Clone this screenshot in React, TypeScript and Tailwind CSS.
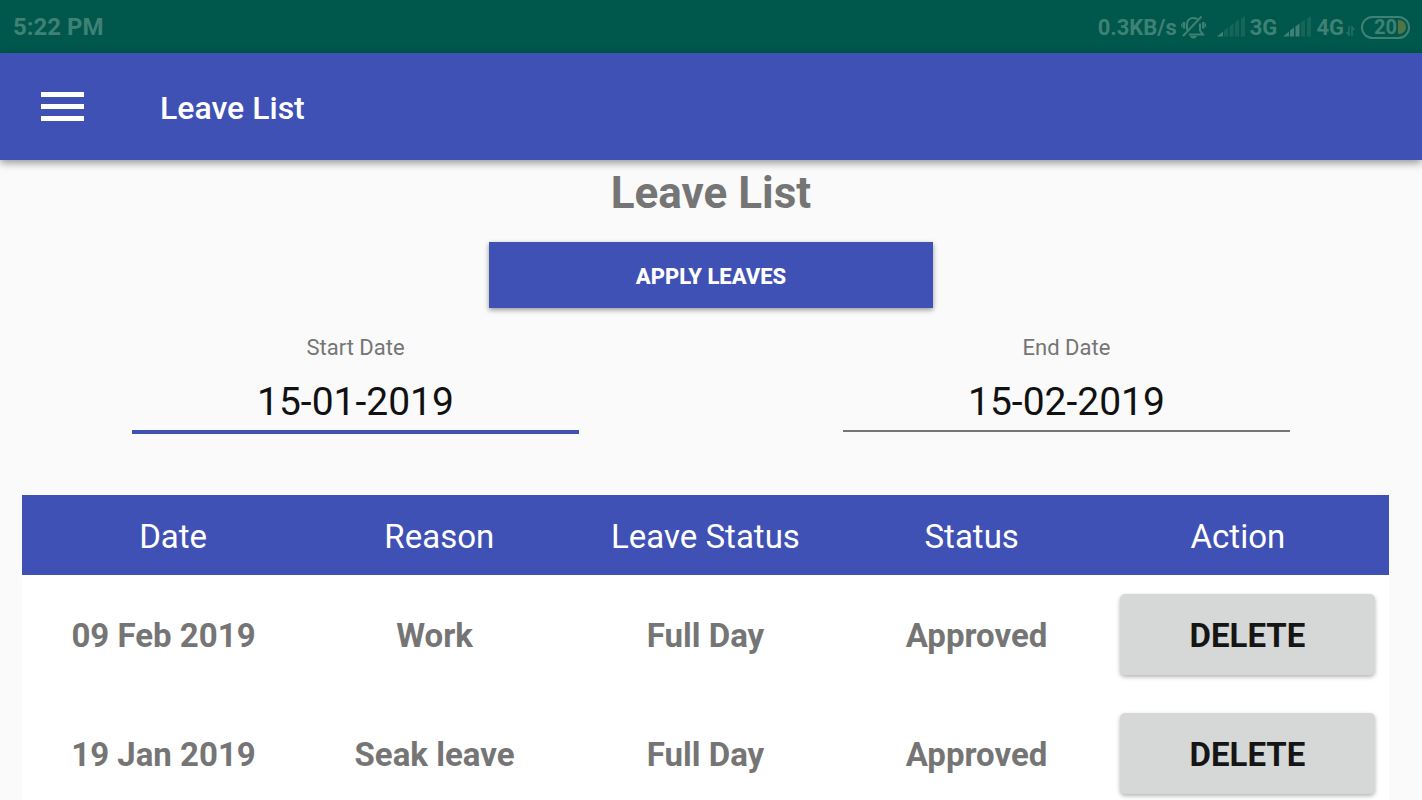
import React, { useState } from 'react';

interface Leave {
  id: number;
  date: string;
  reason: string;
  leaveStatus: string;
  status: string;
}

const initialLeaves: Leave[] = [
  { id: 1, date: '09 Feb 2019', reason: 'Work', leaveStatus: 'Full Day', status: 'Approved' },
  { id: 2, date: '19 Jan 2019', reason: 'Seak leave', leaveStatus: 'Full Day', status: 'Approved' },
];

const columns = ['Date', 'Reason', 'Leave Status', 'Status', 'Action'];

const MutedBellIcon: React.FC = () => (
  <svg width="26" height="26" viewBox="0 0 26 26" fill="none" stroke="currentColor" strokeWidth="2" className="ml-1" aria-hidden="true">
    <path d="M6 16V10.500C6 6.500 8.500 4 12.500 4C14 4 15.500 4.500 16.500 5.200" />
    <path d="M19 9.500V16.500L22 20.500H8" />
    <path d="M2 22L20.500 2.500" />
    <path d="M9.500 22.500h6l-1.500 1.500h-3z" fill="currentColor" strokeWidth="1" />
    <path d="M3 8v6.500M22.300 8v6.500" strokeWidth="2.500" />
    <path d="M0.800 9.500v3.500M24.500 9.500v3.500" strokeWidth="1.200" />
  </svg>
);

const SignalIcon: React.FC<{ level: number }> = ({ level }) => (
  <svg width="29" height="22" viewBox="0 0 29 22" fill="currentColor" aria-hidden="true">
    <path d="M0 20.500L6 15.500V20.500Z" />
    <path d="M7 14.500L11 11.500V20.500H7Z" opacity={level > 1 ? 1 : 0.35} />
    <path d="M12.500 10.500L16.500 7.500V20.500H12.500Z" opacity={level > 2 ? 1 : 0.35} />
    <path d="M18 6.500L22 3.500V20.500H18Z" opacity={level > 3 ? 1 : 0.35} />
    <path d="M24 2.500L28 0V20.500H24Z" opacity={level > 4 ? 1 : 0.35} />
  </svg>
);

const DataArrowsIcon: React.FC = () => (
  <svg width="9" height="10" viewBox="0 0 9 10" fill="none" stroke="currentColor" strokeWidth="1.5" opacity="0.6" className="ml-0.5 mt-2" aria-hidden="true">
    <path d="M3 0V9L0.500 6M6 10V1L8.500 4" />
  </svg>
);

const StatusBar: React.FC = () => (
  <div className="flex h-[53px] shrink-0 items-center justify-between bg-[#00574b] pt-px pl-[13px] pr-3 font-bold text-[#3f8175]">
    <span className="text-[24px]">5:22 PM</span>
    <div className="flex items-center text-[22px]">
      <span>0.3KB/s</span>
      <MutedBellIcon />
      <span className="ml-2.5 flex items-center gap-1">
        <SignalIcon level={1} />
        3G
      </span>
      <span className="ml-1.5 flex items-center gap-1">
        <SignalIcon level={3} />
        4G
      </span>
      <DataArrowsIcon />
      <span className="ml-1.5 flex h-[23px] w-[49px] items-center justify-end rounded-full border-2 border-current pr-0.5 text-[20px]">
        20
        <span className="ml-px h-3.5 w-2 rounded-r-full bg-[#4f7544]" />
      </span>
    </div>
  </div>
);

interface DateFieldProps {
  id: string;
  label: string;
  value: string;
  active: boolean;
  onFocus: () => void;
  onChange: (value: string) => void;
}

const DateField: React.FC<DateFieldProps> = ({ id, label, value, active, onFocus, onChange }) => (
  <div className="flex flex-1 flex-col items-center">
    <label htmlFor={id} className="text-[22px] leading-[30px] text-[#757575]">{label}</label>
    <div className="h-[72px] w-[63%]">
      <input
        type="text"
        id={id}
        value={value}
        onFocus={onFocus}
        onChange={(e) => onChange(e.target.value)}
        className={`block w-full bg-transparent pt-3.5 pb-[3px] text-center text-[39px] leading-[50px] text-[#111111] outline-none ${active ? 'border-b-4 border-[#3f51b5]' : 'border-b-2 border-[#757575]'}`}
      />
    </div>
  </div>
);

const App: React.FC = () => {
  const [leaves, setLeaves] = useState<Leave[]>(initialLeaves);
  const [startDate, setStartDate] = useState('15-01-2019');
  const [endDate, setEndDate] = useState('15-02-2019');
  const [activeField, setActiveField] = useState('startDate');

  const handleDelete = (id: number) => {
    setLeaves(prev => prev.filter(leave => leave.id !== id));
  };

  return (
    <div className="flex h-screen flex-col overflow-hidden bg-[#fafafa] font-[Roboto,sans-serif]">
      <StatusBar />

      <header className="z-10 flex h-[107px] shrink-0 items-center bg-[#3f51b5] px-[41px] text-white shadow-[0_3px_8px_rgba(0,0,0,0.4)]">
        <button type="button" aria-label="Open menu" className="flex w-[43px] flex-col gap-[7px]">
          <span className="h-[5px] bg-white" />
          <span className="h-[5px] bg-white" />
          <span className="h-[5px] bg-white" />
        </button>
        <h1 className="ml-[76px] pt-0.5 text-[32px] font-medium">Leave List</h1>
      </header>

      <main className="flex flex-1 flex-col">
        <h2 className="mt-1 text-center text-[44px] leading-[58px] font-bold text-[#757575]">Leave List</h2>
        <button type="button" className="mx-auto mt-5 h-[66px] w-5/16 shrink-0 bg-[#3f51b5] pt-0.5 text-[22px] font-extrabold text-white shadow-[0_2px_5px_rgba(0,0,0,0.4)]">
          APPLY LEAVES
        </button>

        <div className="mt-[25px] flex">
          <DateField
            id="startDate"
            label="Start Date"
            value={startDate}
            active={activeField === 'startDate'}
            onFocus={() => setActiveField('startDate')}
            onChange={setStartDate}
          />
          <DateField
            id="endDate"
            label="End Date"
            value={endDate}
            active={activeField === 'endDate'}
            onFocus={() => setActiveField('endDate')}
            onChange={setEndDate}
          />
        </div>

        <table className="mt-[60px] mr-[33px] ml-[22px] block bg-white text-[33px]">
          <thead className="block bg-[#3f51b5] text-white">
            <tr className="grid h-20 grid-cols-5 items-center px-[18px]">
              {columns.map(column => (
                <th key={column} scope="col" className="pt-1 font-normal">{column}</th>
              ))}
            </tr>
          </thead>
          <tbody className="block font-bold text-[#757575]">
            {leaves.map(leave => (
              <tr key={leave.id} className="grid grid-cols-5 items-center px-1.5 py-[19px] text-center">
                <td className="pt-0.5">{leave.date}</td>
                <td className="pt-0.5">{leave.reason}</td>
                <td className="pt-0.5">{leave.leaveStatus}</td>
                <td className="pt-0.5">{leave.status}</td>
                <td className="px-2">
                  <button
                    type="button"
                    onClick={() => handleDelete(leave.id)}
                    className="block h-[81px] w-full rounded-[5px] bg-[#d6d7d7] pt-0.5 text-[#151515] shadow-[0_2px_4px_rgba(0,0,0,0.3)]"
                  >
                    DELETE
                  </button>
                </td>
              </tr>
            ))}
          </tbody>
        </table>
      </main>
    </div>
  );
};

export default App;
